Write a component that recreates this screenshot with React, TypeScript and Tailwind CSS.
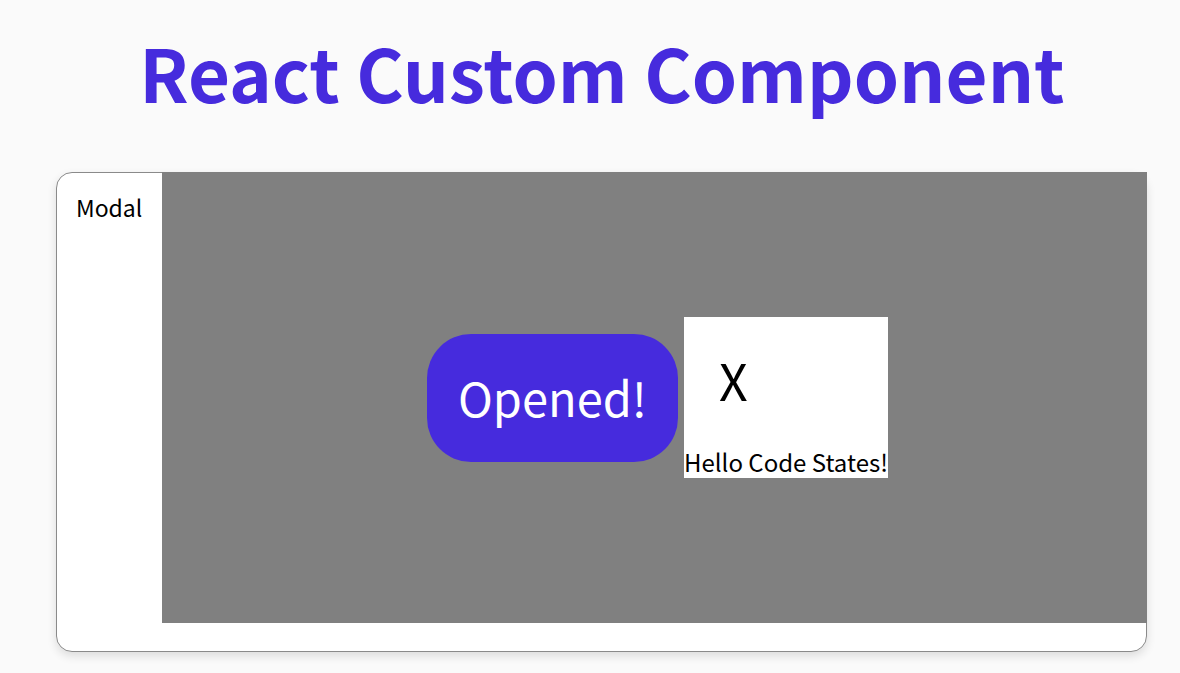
import { useState } from 'react';

export default function App() {
  const [isOpen, setIsOpen] = useState(true);

  return (
    <div
      className="min-h-[673px] bg-[#fafafa] pt-[19px]"
      style={{ fontFamily: '"Noto Sans CJK KR", "Noto Sans", sans-serif' }}
    >
      <h1 className="pl-[24px] text-center text-[72.5px] font-bold leading-[106px] text-[#462bdd]">
        React Custom Component
      </h1>
      <div className="ml-[56px] mt-[47px] flex h-[480px] w-[1091px] rounded-2xl border border-[#8a8a8a] bg-white shadow-[0_4px_10px_rgba(0,0,0,0.12)]">
        <div className="w-[105px] shrink-0 pl-[19px] pt-[18px] text-[23px] leading-[32px] text-black">
          Modal
        </div>
        <div className="-mr-px -mt-px flex h-[451px] flex-1 items-center justify-center bg-[#808080]">
          <div className="flex items-center gap-[6px] pl-[6px]">
            <button
              onClick={() => setIsOpen(!isOpen)}
              className="flex h-[128px] w-[251px] items-center justify-center rounded-[44px] bg-[#462bdd] text-[47px] text-white"
            >
              {isOpen ? 'Opened!' : 'Open Modal'}
            </button>
            {isOpen && (
              <div className="flex h-[161px] flex-col bg-white text-black">
                <div className="h-[129px] pl-[35px] pt-[30px] text-[50px] leading-[64px]">X</div>
                <div className="text-[24px] leading-[32px]">Hello Code States!</div>
              </div>
            )}
          </div>
        </div>
      </div>
    </div>
  );
}
